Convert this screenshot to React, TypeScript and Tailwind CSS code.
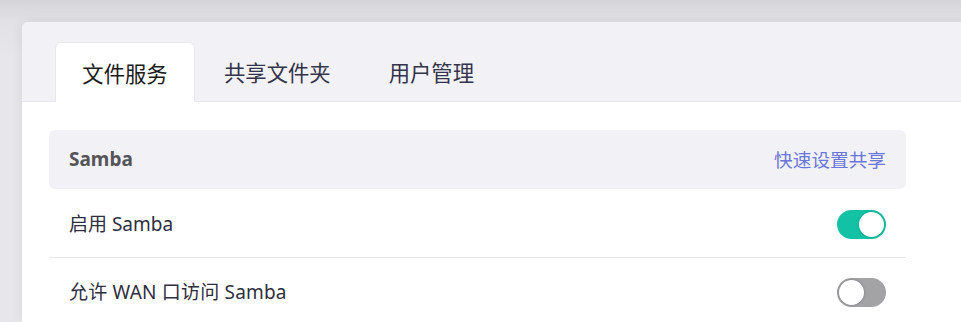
import { useState } from "react";

const tabs = ["文件服务", "共享文件夹", "用户管理"];

const Toggle = ({ on, onChange }: { on: boolean; onChange: () => void }) => (
  <button
    onClick={onChange}
    className={`relative w-[49px] h-[29px] rounded-full transition-colors ${
      on ? "bg-[#13c2a4]" : "bg-[#a3a3a6]"
    }`}
  >
    <span
      className={`absolute top-[2px] w-[25px] h-[25px] rounded-full bg-white shadow-[0_0_3px_rgba(0,0,0,0.25)] transition-all ${
        on ? "left-[22px]" : "left-[2px]"
      }`}
    />
  </button>
);

export default function App() {
  const [active, setActive] = useState(0);
  const [samba, setSamba] = useState(true);
  const [wan, setWan] = useState(false);

  return (
    <div
      className="min-h-[322px] w-[961px] overflow-hidden bg-[linear-gradient(to_bottom,#d5d4d9_0px,#e2e1e6_22px,#e7e7eb_60px)] pl-[22px] pt-[22px]"
      style={{ fontFamily: '"Noto Sans", "Noto Sans CJK SC", sans-serif' }}
    >
      <div className="w-[1000px] h-[300px] rounded-tl-md bg-white shadow-[0_0_14px_rgba(0,0,0,0.07)] overflow-hidden">
        <div className="h-[80px] bg-[#f2f2f6] border-b border-[#e6e6ec] pl-[33px] pt-[21px] flex items-end">
          {tabs.map((t, i) => (
            <button
              key={t}
              onClick={() => setActive(i)}
              className={`h-[59px] pt-[2px] text-[21.33px] leading-none ${
                i === active
                  ? "w-[140px] bg-white rounded-t-md border border-b-0 border-[#e8e8ee] -mb-px h-[60px] text-[#1a1a1a]"
                  : "px-[29px] text-[#33334a]"
              }`}
            >
              {t}
            </button>
          ))}
        </div>

        <div className="pl-[27px] pt-[28px]">
          <div className="w-[857px]">
            <div className="h-[59px] bg-[#f2f2f6] rounded-md px-[20px] flex items-center justify-between">
              <span className="text-[19px] font-bold text-[#555558]">Samba</span>
              <span className="text-[18.67px] text-[#6a76da] cursor-pointer">快速设置共享</span>
            </div>

            <div className="h-[69px] px-[20px] pt-[2px] flex items-center justify-between border-b border-[#e8e8ec]">
              <span className="text-[19px] text-[#2e2e40]">启用 Samba</span>
              <Toggle on={samba} onChange={() => setSamba(!samba)} />
            </div>

            <div className="h-[69px] px-[20px] flex items-center justify-between">
              <span className="text-[19px] tracking-[0.2px] text-[#2e2e40]">允许 WAN 口访问 Samba</span>
              <Toggle on={wan} onChange={() => setWan(!wan)} />
            </div>
          </div>
        </div>
      </div>
    </div>
  );
}
